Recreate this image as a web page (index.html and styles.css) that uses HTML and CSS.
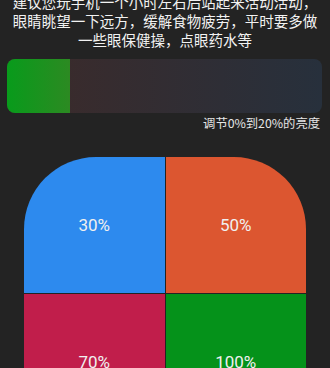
FILE: index.html
```html
<!DOCTYPE html>
<html lang="zh-CN">
<head>
    <meta charset="UTF-8">
    <meta name="viewport" content="width=device-width, initial-scale=1.0">
    <title>护眼亮度</title>
    <link rel="stylesheet" href="styles.css">
</head>
<body>
    <p class="tip">建议您玩手机一个小时左右后站起来活动活动，眼睛眺望一下远方，缓解食物疲劳，平时要多做一些眼保健操，点眼药水等</p>

    <div class="bar">
        <div class="bar-fill"></div>
    </div>
    <p class="bar-label">调节0%到20%的亮度</p>

    <div class="levels">
        <div class="level blue">30%</div>
        <div class="level orange">50%</div>
        <div class="level red">70%</div>
        <div class="level green">100%</div>
    </div>
</body>
</html>
```

FILE: styles.css
```css
body {
    margin: 0;
    background-color: #232323;
    color: #fff;
    font-family: 'Noto Sans CJK SC', 'Noto Sans', sans-serif;
    overflow: hidden;
}
.tip {
    margin: -8px 8px 0 8px;
    font-size: 14.5px;
    line-height: 19px;
    text-align: center;
    color: #f2f2f2;
}
.bar {
    margin: 10px 8px 0 7px;
    height: 54px;
    border-radius: 8px;
    overflow: hidden;
    background: linear-gradient(to right, #3d2a29, #27303c);
}
.bar-fill {
    width: 20%;
    height: 100%;
    background: linear-gradient(to right, #089b1b, #2c8a22);
}
.bar-label {
    margin: 2px 10px 0 0;
    font-size: 12.3px;
    line-height: 16px;
    text-align: right;
    color: #e6e6e6;
}
.levels {
    display: grid;
    grid-template-columns: 1fr 1fr;
    grid-auto-rows: 136px;
    gap: 1px;
    width: 282px;
    margin: 26px 0 0 24px;
    border-radius: 72px 72px 0 0;
    overflow: hidden;
}
.level {
    display: flex;
    align-items: center;
    justify-content: center;
    font-family: Roboto, sans-serif;
    font-size: 17px;
    color: #f0f0f0;
}
.blue { background-color: #2d8aee; }
.orange { background-color: #dc5630; }
.red { background-color: #c11e4b; }
.green { background-color: #05921a; }
```
